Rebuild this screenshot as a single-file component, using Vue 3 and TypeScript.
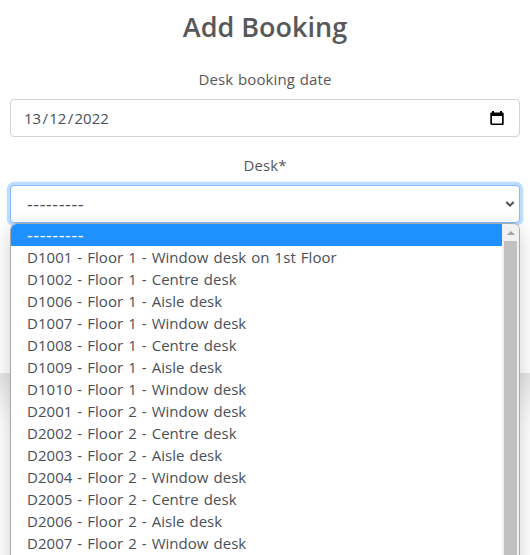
<script setup lang="ts">
import { computed, ref } from 'vue'

interface Desk {
  code: string
  floor: number
  kind: string
}

const bookingDate = ref('13/12/2022')
const dateParts = computed(() => bookingDate.value.split('/'))
const placeholder = '---------'

const desks: Desk[] = [
  { code: 'D1001', floor: 1, kind: 'Window desk on 1st Floor' },
  { code: 'D1002', floor: 1, kind: 'Centre desk' },
  { code: 'D1006', floor: 1, kind: 'Aisle desk' },
  { code: 'D1007', floor: 1, kind: 'Window desk' },
  { code: 'D1008', floor: 1, kind: 'Centre desk' },
  { code: 'D1009', floor: 1, kind: 'Aisle desk' },
  { code: 'D1010', floor: 1, kind: 'Window desk' },
  { code: 'D2001', floor: 2, kind: 'Window desk' },
  { code: 'D2002', floor: 2, kind: 'Centre desk' },
  { code: 'D2003', floor: 2, kind: 'Aisle desk' },
  { code: 'D2004', floor: 2, kind: 'Window desk' },
  { code: 'D2005', floor: 2, kind: 'Centre desk' },
  { code: 'D2006', floor: 2, kind: 'Aisle desk' },
  { code: 'D2007', floor: 2, kind: 'Window desk' },
]
</script>

<template>
  <main class="page">
    <section class="card">
      <h1 class="title"><span>Add Booking</span></h1>
      <label class="label">Desk booking date</label>
      <div class="control date">
        <span class="date-value"><template v-for="(part, i) in dateParts" :key="i"><span v-if="i > 0" class="slash">/</span>{{ part }}</template></span>
        <svg class="calendar" width="14" height="15" viewBox="0 0 14 15">
          <path d="M2 0h2v1.500h6V0h2v1.500h.5c.8 0 1.200.5 1.200 1.200v10.100c0 .8-.5 1.200-1.200 1.200h-11C.8 14 .3 13.500.3 12.800V2.700c0-.7.5-1.200 1.200-1.200H2zM2 5v7.500h10V5z" />
        </svg>
      </div>
      <label class="label desk-label">Desk*</label>
      <div class="select">
        <div class="control focused">
          <span class="dashes">{{ placeholder }}</span>
          <svg class="chevron" width="10" height="8" viewBox="0 0 10 8">
            <path d="M1.300 2 5 5.700 8.700 2" />
          </svg>
        </div>
        <div class="menu">
          <ul class="options">
            <li class="option active"><span class="dashes">{{ placeholder }}</span></li>
            <li v-for="desk in desks" :key="desk.code" class="option">
              {{ desk.code }} - Floor {{ desk.floor }} - {{ desk.kind }}
            </li>
          </ul>
          <div class="scrollbar">
            <svg class="arrow" width="8" height="4" viewBox="0 0 8 4"><path d="M4 0 8 4H0z" /></svg>
            <div class="thumb"></div>
          </div>
        </div>
      </div>
    </section>
  </main>
</template>

<style>
body {
  margin: 0;
  background: #fff;
}
</style>

<style scoped>
.page {
  height: 555px;
  overflow: hidden;
  background: #fff;
  color: #58585a;
  font-family: 'Open Sans', 'Noto Sans', sans-serif;
  font-size: 15px;
}

.card {
  box-sizing: border-box;
  height: 373px;
  margin: 0 -40px;
  padding: 10px 50px 0;
  background: #fff;
  box-shadow: 0 16px 48px rgba(0, 0, 0, 0.15);
}

.title {
  margin: 0 0 17px;
  height: 34px;
  line-height: 34px;
  text-align: center;
  font-size: 27px;
  font-weight: 600;
}

.label {
  display: block;
  height: 24px;
  margin-bottom: 8px;
  padding-top: 6px;
  line-height: 24px;
  text-align: center;
  letter-spacing: 0.1px;
  word-spacing: 0.8px;
}

.control {
  box-sizing: border-box;
  display: flex;
  align-items: center;
  justify-content: space-between;
  height: 38px;
  border: 1px solid #ced4da;
  border-radius: 4px;
  background: #fff;
  color: #495057;
}

.date {
  padding: 0 15px 0 13px;
}

.slash {
  padding: 0 1.3px;
}

.calendar {
  fill: #000;
}

.desk-label {
  padding-top: 16px;
}

.select {
  position: relative;
}

.focused {
  padding: 0 4px 0 16px;
  border-color: #80bdff;
  box-shadow: 0 0 0 3.2px rgba(0, 123, 255, 0.25);
}

.dashes {
  font-size: 18px;
  font-weight: 400;
  line-height: 22px;
  letter-spacing: 0.55px;
  word-spacing: 0;
}

.chevron {
  fill: none;
  stroke: #495057;
  stroke-width: 2;
}

.menu {
  position: absolute;
  top: 38px;
  left: 0;
  right: 0;
  box-sizing: border-box;
  display: flex;
  height: 345px;
  overflow: hidden;
  border: 1px solid #a9a9a9;
  border-radius: 7px 7px 0 0;
  background: #fff;
  box-shadow: 0 6px 20px rgba(0, 0, 0, 0.19);
}

.options {
  flex: 1;
  margin: 0;
  padding: 0;
  list-style: none;
}

.option {
  height: 22px;
  padding-left: 16px;
  line-height: 22px;
  white-space: nowrap;
  color: #495057;
  letter-spacing: 0.03px;
  word-spacing: 1.1px;
}

.active {
  display: flex;
  align-items: center;
  background: #1e90ff;
  color: #fff;
}

.scrollbar {
  display: flex;
  flex-direction: column;
  align-items: center;
  width: 17px;
  background: #f1f1f1;
}

.arrow {
  flex: none;
  margin: 7px 0 6px;
  fill: #a3a3a3;
}

.thumb {
  flex: 1;
  width: 13px;
  background: #c1c1c1;
}
</style>
